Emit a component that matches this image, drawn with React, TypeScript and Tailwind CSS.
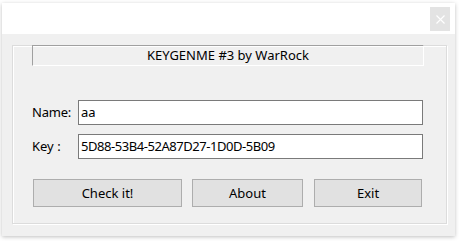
import React from "react";

const font = { fontFamily: '"Noto Sans", "Open Sans", sans-serif' };

function WinButton({ label, width }: { label: string; width: string }) {
  return (
    <button
      className={`${width} h-[28px] bg-[#e1e1e1] border border-[#adadad] text-[13px] text-black leading-none`}
    >
      {label}
    </button>
  );
}

export default function App() {
  return (
    <div
      className="w-[459px] h-[241px] bg-white overflow-hidden pt-[3px] pl-[2px] text-black"
      style={font}
    >
      <div className="w-[453px] h-[233px] flex flex-col shadow-[0_1px_4px_rgba(0,0,0,0.25)]">
        {/* title bar */}
        <div className="h-[31px] bg-white flex justify-end shrink-0">
          <div className="mt-[4px] mr-[5px] w-[20px] h-[24px] bg-[#e3e3e3] flex items-center justify-center">
            <svg width="9" height="9" viewBox="0 0 9 9">
              <path d="M0.5 0.5 L8.5 8.5 M8.5 0.5 L0.5 8.5" stroke="#fff" strokeWidth="1.1" />
            </svg>
          </div>
        </div>

        {/* client area */}
        <div className="flex-1 bg-[#f0f0f0] pt-[11px] pl-[10px]">
          <div className="w-[435px] h-[179px] border border-[#dcdcdc] shadow-[inset_1px_1px_0_#fff,1px_1px_0_#fff] pl-[19px] flex flex-col">
            <div className="-mt-px w-[392px] h-[21px] border border-t-[#a0a0a0] border-l-[#a0a0a0] border-r-white border-b-white flex items-center justify-center text-[13px]">
              KEYGENME #3 by WarRock
            </div>

            <div className="mt-[34px] flex items-center">
              <span className="w-[46px] text-[13px] tracking-[-0.2px]">Name:</span>
              <div className="w-[345px] h-[25px] bg-white border border-[#7a7a7a] flex items-center pl-[2px] text-[13px]">
                aa
              </div>
            </div>

            <div className="mt-[9px] flex items-center">
              <span className="w-[46px] text-[13px]">Key :</span>
              <div className="w-[345px] h-[25px] bg-white border border-[#7a7a7a] flex items-center pl-[2px] text-[13px] tracking-[-0.45px]">
                5D88-53B4-52A87D27-1D0D-5B09
              </div>
            </div>

            <div className="mt-[20px] flex">
              <div className="ml-px">
                <WinButton label="Check it!" width="w-[149px]" />
              </div>
              <div className="ml-[10px]">
                <WinButton label="About" width="w-[111px]" />
              </div>
              <div className="ml-[11px]">
                <WinButton label="Exit" width="w-[108px]" />
              </div>
            </div>
          </div>
        </div>
      </div>
    </div>
  );
}
